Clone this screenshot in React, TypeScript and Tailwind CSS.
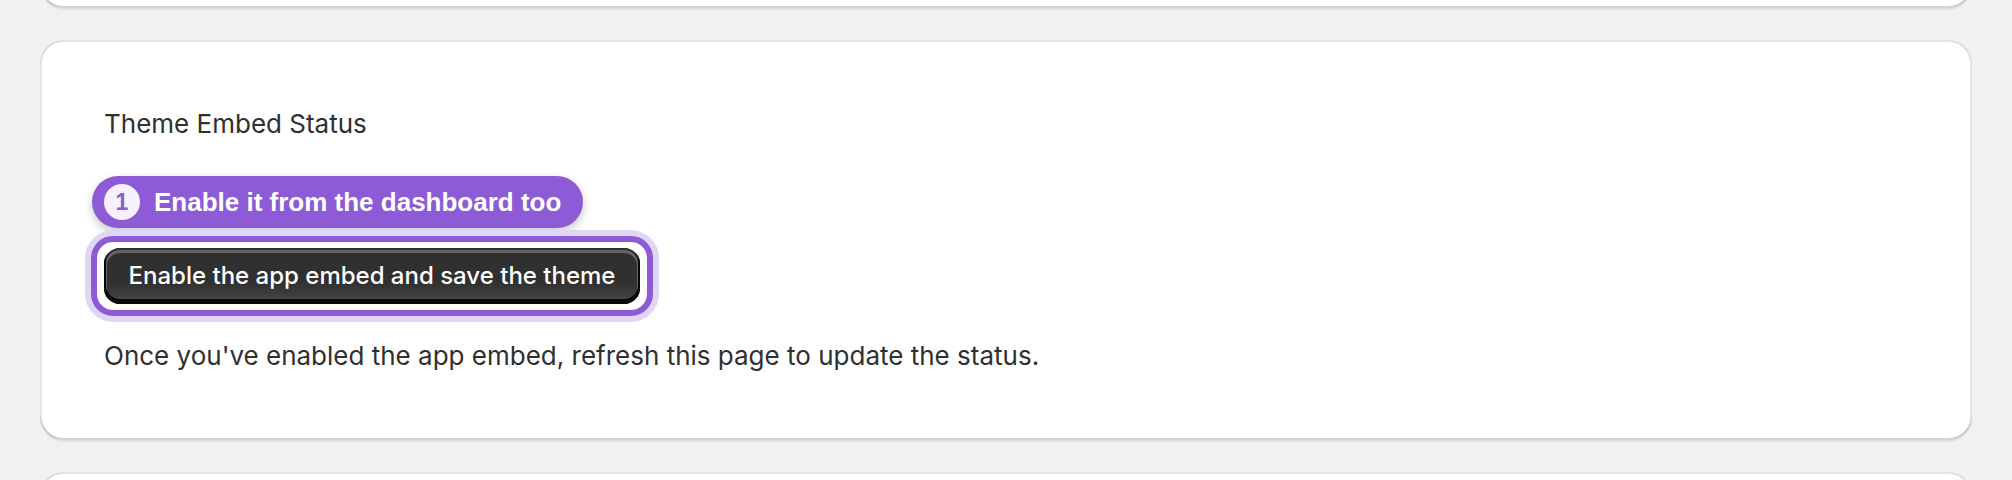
const cardShadow =
  "shadow-[0_2px_0_0_rgba(26,26,26,0.07),inset_0_2px_0_0_rgba(204,204,204,0.5),inset_0_-2px_0_0_rgba(0,0,0,0.17),inset_-2px_0_0_0_rgba(0,0,0,0.1),inset_2px_0_0_0_rgba(0,0,0,0.1)]";

function StepBadge({ n, label }: { n: number; label: string }) {
  return (
    <div className="-ml-[12px] inline-flex h-[52px] items-center gap-[14px] self-start rounded-full bg-[#8d5bd6] pl-[12px] pr-[22px] shadow-[0_4px_10px_rgba(0,0,0,0.22)] font-['Liberation_Sans',Arial,sans-serif]">
      <span className="flex h-[36px] w-[36px] items-center justify-center rounded-full bg-[#f6f1fd] text-[23px] font-bold text-[#8d5bd6]">
        {n}
      </span>
      <span className="text-[26px] font-bold leading-none text-white">{label}</span>
    </div>
  );
}

export default function App() {
  return (
    <div className="h-[480px] overflow-hidden bg-[#f0f1f2] font-['Inter',sans-serif] text-[#303030]">
      <div className="-mt-[192px] flex flex-col gap-[32px] px-[40px]">
        {/* previous card, only its bottom edge shows */}
        <section className={`h-[200px] rounded-[24px] bg-white ${cardShadow}`} />

        {/* theme embed status */}
        <section className={`flex h-[400px] flex-col rounded-[24px] bg-white p-[64px] ${cardShadow}`}>
          <h2 className="text-[26px] leading-[40px]">Theme Embed Status</h2>

          <div className="mt-[32px] flex flex-col gap-[8px]">
            <StepBadge n={1} label="Enable it from the dashboard too" />

            <div className="-ml-[13px] self-start rounded-[22px] border-[6px] border-[#8d5bd6] bg-white px-[7px] py-[6px] shadow-[0_0_0_6px_#e1d5f5]">
              <button className="h-[56px] w-[536px] rounded-[16px] bg-[linear-gradient(180deg,#303030_60%,#474747)] text-[24px] font-medium text-white shadow-[inset_0_-3px_0_2px_rgba(0,0,0,0.85),inset_0_0_0_2px_#303030,inset_0_2px_0_3px_rgba(255,255,255,0.25)]">
                Enable the app embed and save the theme
              </button>
            </div>
          </div>

          <p className="mt-[20px] text-[26px] leading-[40px]">
            Once you've enabled the app embed, refresh this page to update the status.
          </p>
        </section>

        {/* next card */}
        <section className={`h-[200px] rounded-[24px] bg-white ${cardShadow}`} />
      </div>
    </div>
  );
}
